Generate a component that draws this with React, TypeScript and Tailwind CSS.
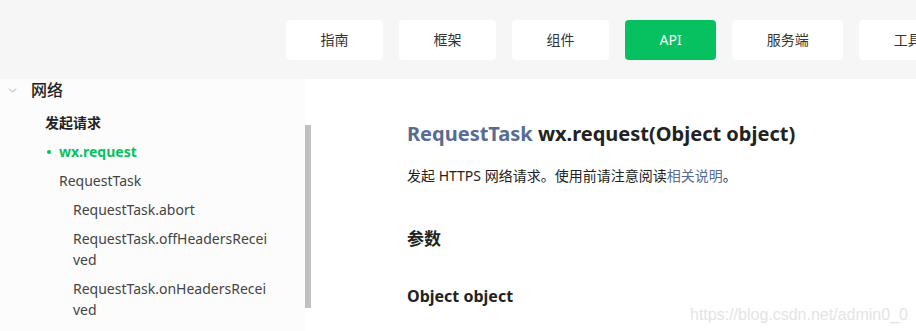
import { ChevronDown } from "lucide-react";

const tabs = ["指南", "框架", "组件", "API", "服务端", "工具"];

function TopNav() {
  return (
    <div className="h-[79px] bg-[#f6f6f6] flex items-center pl-[286px] gap-4 overflow-hidden">
      {tabs.map((t) => (
        <div
          key={t}
          className={
            t === "API"
              ? "h-10 shrink-0 px-[34.5px] rounded flex items-center bg-[#07c160] text-white text-[14px]"
              : "h-10 shrink-0 px-[34.5px] rounded flex items-center bg-white text-[#333] text-[14px]"
          }
        >
          {t}
        </div>
      ))}
    </div>
  );
}

function Sidebar() {
  return (
    <div className="w-[311px] shrink-0 flex">
      <div className="w-[305px] bg-[#fcfcfc] text-[#333]">
        <div className="h-[22px] flex items-center">
          <ChevronDown size={13} strokeWidth={1.5} className="ml-[6px] mr-[12px] text-[#999]" />
          <span className="text-[16px] font-medium text-[#222]">网络</span>
        </div>
        <div className="mt-[7px] pl-[45px] text-[14px]">
          <div className="py-1 leading-[21px] font-semibold text-[#222]">发起请求</div>
          <div className="py-1 leading-[21px] font-bold text-[#07c160] flex items-center">
            <span className="w-1 h-1 rounded-full bg-[#07c160] ml-[2px] mr-[8px]" />
            wx.request
          </div>
          <div className="py-1 pl-[14px] leading-[21px] text-[#444]">RequestTask</div>
          <div className="pl-[28px] w-[226px] text-[#444] break-all">
            <div className="py-1 leading-[21px]">RequestTask.abort</div>
            <div className="py-1 leading-[21px]">RequestTask.offHeadersReceived</div>
            <div className="py-1 leading-[21px]">RequestTask.onHeadersReceived</div>
          </div>
        </div>
      </div>
      <div className="w-[6px] flex flex-col">
        <div className="h-[46px]" />
        <div className="h-[183px] bg-[#c1c1c1]" />
      </div>
    </div>
  );
}

function Content() {
  return (
    <div className="pl-[96px] pt-[43px] text-[#222]">
      <h1 className="text-[20px] font-bold leading-[24px]">
        <span className="text-[#576b95]">RequestTask</span> wx.request(Object object)
      </h1>
      <p className="mt-[20px] text-[14px] leading-[20px]">
        发起 HTTPS 网络请求。使用前请注意阅读<span className="text-[#576b95]">相关说明</span>。
      </p>
      <h2 className="mt-[41px] text-[17px] font-bold leading-[24px]">参数</h2>
      <h3 className="mt-[33px] text-[16px] font-bold leading-[24px]">Object object</h3>
    </div>
  );
}

export default function App() {
  return (
    <div
      className="relative w-[916px] h-[331px] overflow-hidden bg-white"
      style={{ fontFamily: '"Noto Sans", "Noto Sans CJK SC", sans-serif' }}
    >
      <TopNav />
      <div className="flex h-[252px]">
        <Sidebar />
        <Content />
      </div>
      <div className="absolute left-[690px] top-[303px] text-[16px] text-[#e4e4e4] font-['Liberation_Sans',sans-serif]">
        https://blog.csdn.net/admin0_0
      </div>
    </div>
  );
}
